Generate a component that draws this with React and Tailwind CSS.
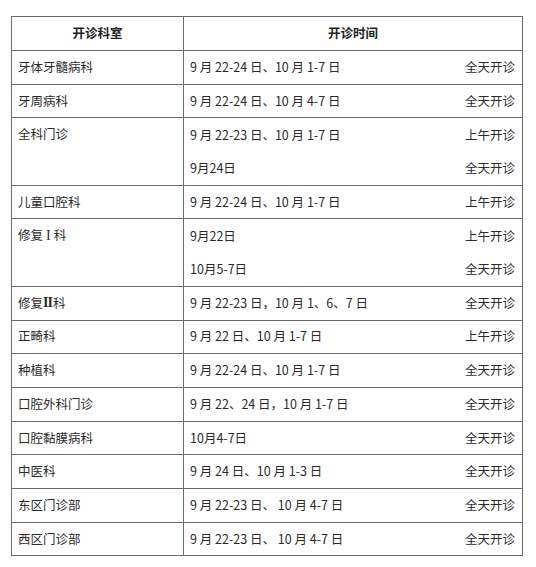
const rows = [
  { dept: '牙体牙髓病科', lines: [['9 月 22-24 日、10 月 1-7 日', '全天开诊']] },
  { dept: '牙周病科', lines: [['9 月 22-24 日、10 月 4-7 日', '全天开诊']] },
  {
    dept: '全科门诊',
    lines: [
      ['9 月 22-23 日、10 月 1-7 日', '上午开诊'],
      ['9月24日', '全天开诊'],
    ],
  },
  { dept: '儿童口腔科', lines: [['9 月 22-24 日、10 月 1-7 日', '上午开诊']] },
  {
    dept: ['修复', 'Ⅰ', '科'],
    lines: [
      ['9月22日', '上午开诊'],
      ['10月5-7日', '全天开诊'],
    ],
  },
  { dept: ['修复', 'Ⅱ', '科'], lines: [['9 月 22-23 日，10 月 1、6、7 日', '全天开诊']] },
  { dept: '正畸科', lines: [['9 月 22 日、10 月 1-7 日', '上午开诊']] },
  { dept: '种植科', lines: [['9 月 22-24 日、10 月 1-7 日', '全天开诊']] },
  { dept: '口腔外科门诊', lines: [['9 月 22、24 日，10 月 1-7 日', '全天开诊']] },
  { dept: '口腔黏膜病科', lines: [['10月4-7日', '全天开诊']] },
  { dept: '中医科', lines: [['9 月 24 日、10 月 1-3 日', '全天开诊']] },
  { dept: '东区门诊部', lines: [['9 月 22-23 日、 10 月 4-7 日', '全天开诊']] },
  { dept: '西区门诊部', lines: [['9 月 22-23 日、 10 月 4-7 日', '全天开诊']] },
];

function DeptName({ dept }) {
  if (typeof dept === 'string') return dept;
  // roman numeral drawn in a serif face, like the original table
  const one = dept[1] === 'Ⅰ';
  return (
    <>
      {dept[0]}
      <span
        className={`text-[14px] leading-none ${one ? 'px-[3px]' : 'font-bold tracking-[-1px] pr-[1px]'}`}
        style={{ fontFamily: '"Liberation Serif", serif' }}
      >
        {one ? 'I' : 'II'}
      </span>
      {dept[2]}
    </>
  );
}

export default function App() {
  return (
    <div
      className="w-[536px] h-[567px] bg-white pt-[16px] pl-[11px] text-[12.5px] text-[#2b2b2b]"
      style={{ fontFamily: '"Noto Sans CJK SC", "Noto Sans", sans-serif' }}
    >
      <div className="w-[512px] border border-[#6b6b6b]">
        {/* Header */}
        <div className="flex border-b border-[#6b6b6b] h-[34px] font-bold text-[#1f1f1f]">
          <div className="w-[172px] border-r border-[#6b6b6b] flex items-center justify-center">
            开诊科室
          </div>
          <div className="flex-1 flex items-center justify-center">开诊时间</div>
        </div>

        {rows.map((row, i) => (
          <div
            key={i}
            className={`flex ${i < rows.length - 1 ? 'border-b border-[#6b6b6b]' : ''}`}
          >
            <div className="w-[172px] border-r border-[#6b6b6b] px-[6px]">
              <div className="h-[32.7px] flex items-center">
                <DeptName dept={row.dept} />
              </div>
            </div>
            <div className="flex-1 flex flex-col">
              {row.lines.map(([date, status]) => (
                <div
                  key={date}
                  className={`${row.lines.length > 1 ? 'h-[33.2px]' : 'h-[32.7px]'} flex items-center justify-between pl-[6px] pr-[7px]`}
                >
                  <span>{date}</span>
                  <span>{status}</span>
                </div>
              ))}
            </div>
          </div>
        ))}
      </div>
    </div>
  );
}
